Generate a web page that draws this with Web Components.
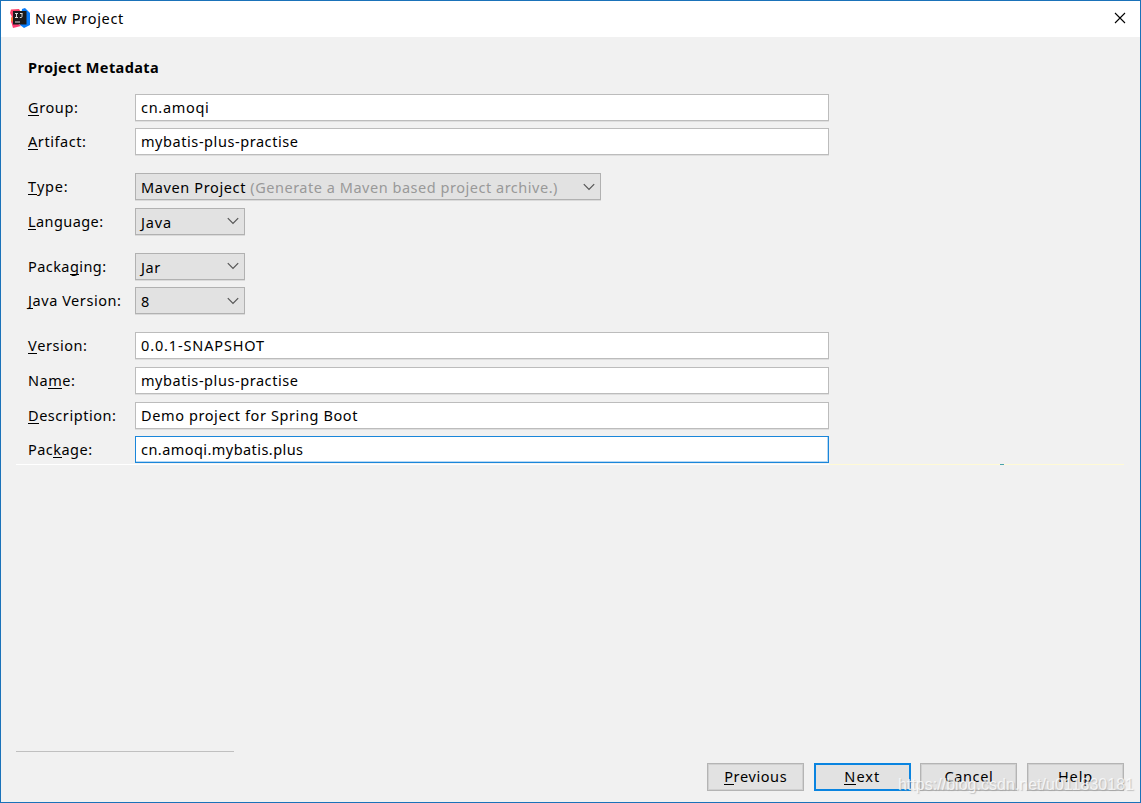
<!DOCTYPE html>
<html lang="en">
<head>
<meta charset="utf-8">
<title>New Project</title>
<style>
html,body{margin:0;height:100%;overflow:hidden}
body{font:14.5px/20px "Noto Sans","Open Sans",sans-serif;color:#000}
</style>
</head>
<body>
<project-dialog></project-dialog>
<script>
const define = (name, html, setup) => customElements.define(name, class extends HTMLElement {
  constructor() {
    super();
    this.attachShadow({mode: 'open'}).innerHTML = html;
  }
  connectedCallback() { if (setup) setup(this, this.shadowRoot); }
});

// Text tracked to an exact advance width.
define('tracked-text', `<style>
:host{display:inline-block;white-space:pre;font-size:var(--size,14.5px)}
::slotted(u){text-decoration:none;box-shadow:0 1px 0 #000;display:inline-block;line-height:16px}
span{display:inline-block}
</style><span><slot></slot></span>`, (el, root) => {
  const span = root.querySelector('span');
  const n = el.textContent.length;
  const gap = (Number(el.getAttribute('width')) - span.getBoundingClientRect().width) / n;
  span.style.letterSpacing = gap.toFixed(3) + 'px';
});

define('text-field', `<style>
:host{display:flex;align-items:center;box-sizing:border-box;width:694px;height:27px;padding:0 0 1px 5px;background:#fff;border:1px solid #bcbcbc;box-shadow:0 1px 0 #dedede}
:host([focused]){border-color:#1a86da;box-shadow:inset -1px -1px 0 #b5d8f5}
</style><slot></slot>`);

define('combo-box', `<style>
:host{display:flex;align-items:center;justify-content:space-between;box-sizing:border-box;width:110px;height:27px;padding:1px 5px 0 5px;background:#e2e2e2;border:1px solid #b1b1b1;box-shadow:0 1px 0 #dadada}
:host([wide]){width:466px}
svg{display:block;flex:none;margin-top:-1px}
</style><span><slot></slot></span><svg width="12" height="8" fill="none" stroke="#555" stroke-width="1.2"><path d="M.8 1.2 6 6.5 11.2 1.2"/></svg>`);

define('form-row', `<style>
:host{display:grid;grid-template-columns:107px auto;justify-content:start;align-items:center;height:27px}
::slotted([slot=label]){margin-top:-1px}
</style><slot name="label"></slot><slot></slot>`);

define('push-button', `<style>
:host{display:flex;align-items:center;justify-content:center;box-sizing:border-box;width:97px;height:28px;padding-bottom:2px;background:#e2e2e2;border:1px solid #b4b4b4;box-shadow:inset 0 0 0 1px #d0d0d0}
:host([primary]){border:2px solid #0a84e0;box-shadow:none}
</style><slot></slot>`);

define('title-bar', `<style>
:host{display:flex;align-items:center;height:36px;background:#fff;padding:0 14px 0 9px;box-sizing:border-box}
.logo{margin-right:5px;margin-top:-2px}
.close{margin-left:auto;margin-top:-2px}
::slotted(*){margin-top:-2px}
svg{display:block;flex:none}
</style>
<svg class="logo" width="20" height="20" viewBox="0 0 20 20">
<path fill="#ff7a35" d="M1 9.5 3 7.5 6 12 5 18 1 14z"/>
<path fill="#fb4168" d="M1 1.5 9 1 12 6 4 11 2 9 0 5z"/>
<path fill="#087cfa" d="m12 1 3-1 5 5v12l-6 3-4-3z"/>
<path fill="#fe3d74" d="m1 13 6 2 4 3-8 2z"/>
<path fill="#1a1a1c" d="M3 3h13.5v13.5H3z"/>
<path fill="none" stroke="#ddd" stroke-width="1" d="M5 5.5h3M6.5 5.5v4M5 9.5h3M10 5.5h2.5M12 5.5v3q0 1-1 1h-1.2M5 14h5"/>
</svg><slot></slot>
<svg class="close" width="12" height="12" fill="none" stroke="#000" stroke-width="1.1"><path d="m1 1 10 10M11 1 1 11"/></svg>`);

define('project-dialog', `<style>
:host{display:flex;flex-direction:column;box-sizing:border-box;width:1141px;height:803px;background:#f1f1f1;border:1px solid #1a72b9;position:relative}
main{display:flex;flex-direction:column;padding:20px 0 0 27px}
h1{font-size:14.5px;line-height:20px;margin:0 0 16.5px;font-weight:700;height:20px}
.rows{display:flex;flex-direction:column;gap:7.7px}
.gap{margin-top:10.2px}
.hint{color:#999}
.line{display:grid;grid-template-columns:813px 1fr;width:1108px;height:1px;margin:1px 0 0 15px;background:#fff;flex:none}
.line i{grid-column:2;height:1px;background:linear-gradient(90deg,#fffad6 171px,#4aa4a8 171px 175px,#fffad6 175px)}
footer{margin-top:auto;display:flex;flex-direction:column;padding:0 16px 11px 15px}
hr{width:218px;height:1px;border:0;margin:0 0 11px;background:#c0c0c0}
.buttons{display:flex;justify-content:flex-end;gap:9.6px}
.mark{position:absolute;left:897px;top:774px;font:16px/20px "Liberation Sans",sans-serif;color:#ffffffc0;text-shadow:1px 1px 1px #9998}
</style>
<title-bar><tracked-text width="89">New Project</tracked-text></title-bar>
<main>
<h1><tracked-text width="131">Project Metadata</tracked-text></h1>
<div class="rows">
<form-row><tracked-text slot="label" width="50.5"><u>G</u>roup:</tracked-text><text-field><tracked-text width="68.5">cn.amoqi</tracked-text></text-field></form-row>
<form-row><tracked-text slot="label" width="58.5"><u>A</u>rtifact:</tracked-text><text-field><tracked-text width="157.5">mybatis-plus-practise</tracked-text></text-field></form-row>
<form-row class="gap"><tracked-text slot="label" width="40.5"><u>T</u>ype:</tracked-text><combo-box wide><tracked-text width="105">Maven Project</tracked-text><tracked-text width="312" class="hint"> (Generate a Maven based project archive.)</tracked-text></combo-box></form-row>
<form-row><tracked-text slot="label" width="75.5"><u>L</u>anguage:</tracked-text><combo-box><tracked-text width="31">Java</tracked-text></combo-box></form-row>
<form-row class="gap"><tracked-text slot="label" width="78.5">Packa<u>g</u>ing:</tracked-text><combo-box><tracked-text width="20">Jar</tracked-text></combo-box></form-row>
<form-row><tracked-text slot="label" width="93.5"><u>J</u>ava Version:</tracked-text><combo-box><tracked-text width="9">8</tracked-text></combo-box></form-row>
<form-row class="gap"><tracked-text slot="label" width="59.5"><u>V</u>ersion:</tracked-text><text-field><tracked-text width="124">0.0.1-SNAPSHOT</tracked-text></text-field></form-row>
<form-row><tracked-text slot="label" width="47.5">Na<u>m</u>e:</tracked-text><text-field><tracked-text width="157.5">mybatis-plus-practise</tracked-text></text-field></form-row>
<form-row><tracked-text slot="label" width="88.5"><u>D</u>escription:</tracked-text><text-field><tracked-text width="217">Demo project for Spring Boot</tracked-text></text-field></form-row>
<form-row><tracked-text slot="label" width="64.5">Pac<u>k</u>age:</tracked-text><text-field focused><tracked-text width="162.5">cn.amoqi.mybatis.plus</tracked-text></text-field></form-row>
</div>
</main>
<div class="line"><i></i></div>
<footer>
<hr>
<div class="buttons">
<push-button><tracked-text width="63"><u>P</u>revious</tracked-text></push-button>
<push-button primary><tracked-text width="36"><u>N</u>ext</tracked-text></push-button>
<push-button><tracked-text width="49">Cancel</tracked-text></push-button>
<push-button><tracked-text width="35">Help</tracked-text></push-button>
</div>
</footer>
<tracked-text class="mark" style="--size:16px" width="236">https://blog.csdn.net/u011830181</tracked-text>`);
</script>
</body>
</html>
